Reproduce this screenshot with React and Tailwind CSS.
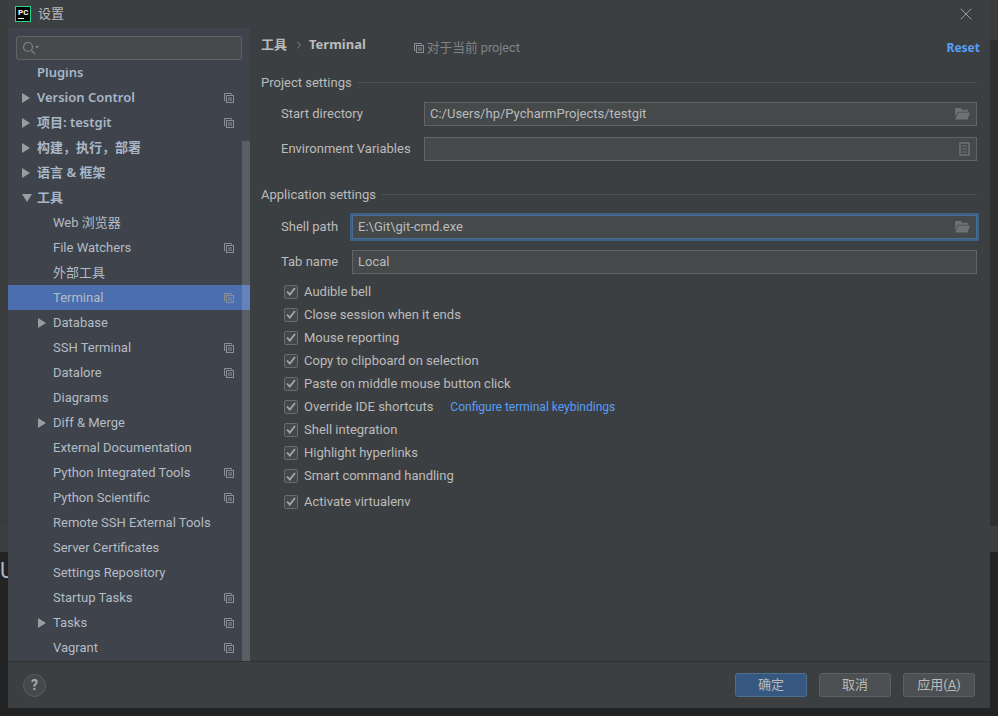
import { ChevronRight, X } from "lucide-react";

const font = { fontFamily: 'Roboto, "Noto Sans CJK SC", sans-serif' };
const boldFont = "font-['Noto_Sans','Noto_Sans_CJK_SC',sans-serif]";

const navItems = [
  { label: "Version Control", top: true, arrow: "right", copy: true },
  { label: "项目: testgit", top: true, arrow: "right", copy: true },
  { label: "构建，执行，部署", top: true, arrow: "right" },
  { label: "语言 & 框架", top: true, arrow: "right" },
  { label: "工具", top: true, arrow: "down" },
  { label: "Web 浏览器" },
  { label: "File Watchers", copy: true },
  { label: "外部工具" },
  { label: "Terminal", copy: true, active: true },
  { label: "Database", arrow: "right" },
  { label: "SSH Terminal", copy: true },
  { label: "Datalore", copy: true },
  { label: "Diagrams" },
  { label: "Diff & Merge", arrow: "right" },
  { label: "External Documentation" },
  { label: "Python Integrated Tools", copy: true },
  { label: "Python Scientific", copy: true },
  { label: "Remote SSH External Tools" },
  { label: "Server Certificates" },
  { label: "Settings Repository" },
  { label: "Startup Tasks", copy: true },
  { label: "Tasks", arrow: "right", copy: true },
  { label: "Vagrant", copy: true },
];

const checks = [
  "Audible bell",
  "Close session when it ends",
  "Mouse reporting",
  "Copy to clipboard on selection",
  "Paste on middle mouse button click",
  "Override IDE shortcuts",
  "Shell integration",
  "Highlight hyperlinks",
  "Smart command handling",
  "Activate virtualenv",
];

function CopyIcon({ className = "" }) {
  return (
    <svg width="10" height="10" viewBox="0 0 10 10" fill="none" stroke="#8a9096" className={className}>
      <path d="M7.5 1.5V.5H.5v7h1" />
      <rect x="2.5" y="2.5" width="7" height="7" />
      <path d="M4 5h4M4 7h4" />
    </svg>
  );
}

function FolderIcon() {
  return (
    <svg width="15" height="12" viewBox="0 0 16 13" fill="#6e7275">
      <path d="M0 0h6l1.500 2H14v2H3L0 10z" />
      <path d="M3.500 5H16l-2.500 7.500H0z" />
    </svg>
  );
}

function Triangle({ dir }) {
  if (dir === "down") {
    return (
      <svg width="10" height="8" viewBox="0 0 10 8" fill="#9a9da0">
        <path d="M0 0h10L5 8z" />
      </svg>
    );
  }
  return (
    <svg width="8" height="10" viewBox="0 0 8 10" fill="#9a9da0">
      <path d="M0 0l8 5-8 5z" />
    </svg>
  );
}

function NavRow({ item }) {
  return (
    <div className={`h-[25px] flex items-center relative ${item.active ? "bg-[#4b6eaf]" : ""}`}>
      <div className={`${item.top ? "w-[29px] pl-[14px]" : "w-[45px] pl-[30px]"} shrink-0 flex items-center`}>
        {item.arrow && <Triangle dir={item.arrow} />}
      </div>
      <span className={`whitespace-nowrap ${item.top ? `text-[13px] font-semibold text-[#a9b7c6] ${boldFont}` : "text-[13px] text-[#b4bcc4]"}`}>
        {item.label}
      </span>
      {item.copy && <CopyIcon className="absolute left-[216px] top-[8px]" />}
    </div>
  );
}

function Field({ value, icon, focused }) {
  return (
    <div
      className={`flex-1 h-[24px] flex items-center justify-between pl-[5px] pr-[6px] bg-[#45494a] text-[13px] text-[#bbbbbb] border ${
        focused ? "border-[#466d94] outline-2 outline-[#3d6185]" : "border-[#646464]"
      }`}
    >
      <span>{value}</span>
      {icon}
    </div>
  );
}

function SectionTitle({ children }) {
  return (
    <div className="flex items-center gap-[6px] text-[13px] text-[#bbbbbb]">
      <span>{children}</span>
      <div className="flex-1 h-px bg-[#515151]" />
    </div>
  );
}

export default function App() {
  return (
    <div className="w-[998px] h-[716px] relative overflow-hidden bg-[#232323]" style={font}>
      {/* window behind the dialog */}
      <div className="h-[526px] bg-[#3a3b3c]" />
      <div className="h-[26px] bg-[#3c3d3e]" />
      <div className="pt-[8px] text-[22px] text-[#a9b7c6] leading-none">U</div>
      <div className="absolute right-0 top-[40px] w-[8px] h-[486px] bg-[#2e2f30]" />

      <div className="absolute left-[8px] top-0 w-[982px] h-[708px] bg-[#3c3f41] flex flex-col">
        <div className="h-[28px] shrink-0 flex items-center relative">
          <div className="ml-[7px] w-[16px] h-[16px] bg-black border border-[#21d789] flex flex-col px-[2px] pt-[1px]">
            <span className="text-[8px] font-bold leading-[9px] text-white">PC</span>
            <span className="w-[6px] h-px bg-white mt-[1px]" />
          </div>
          <span className="ml-[7px] text-[13px] text-[#bbbbbb]">设置</span>
          <X size={20} strokeWidth={1} className="absolute right-[14px] top-[4px] text-[#afb1b3]" />
        </div>

        <div className="flex-1 flex min-h-0">
          {/* sidebar */}
          <div className="w-[242px] shrink-0 bg-[#3e434c] relative overflow-hidden">
            <div className="mx-[8px] mt-[8px] h-[24px] bg-[#45494a] border border-[#646464] rounded-[3px] flex items-center pl-[5px]">
              <svg width="17" height="15" viewBox="0 0 17 15" fill="none" stroke="#7f8386" strokeWidth="1.200">
                <circle cx="6" cy="6" r="4.500" />
                <path d="M9.500 9.500L13 13" />
                <path d="M13 5h4l-2 2.500z" fill="#7f8386" stroke="none" />
              </svg>
            </div>
            <div className="mt-[8px] overflow-hidden">
              <div className="-mt-[8px] h-[25px] flex items-center pl-[29px]">
                <span className={`text-[13px] font-semibold text-[#a9b7c6] ${boldFont}`}>Plugins</span>
              </div>
              {navItems.map((item) => (
                <NavRow key={item.label} item={item} />
              ))}
            </div>
            <div className="absolute right-0 top-[113px] bottom-0 w-[8px] bg-[#ffffff]/15" />
          </div>

          {/* content */}
          <div className="flex-1 px-[11px] pr-[13px] min-w-0">
            <div className="h-[45px] flex items-start pt-[7px] relative">
              <span className="text-[13px] font-semibold text-[#bbbbbb]">工具</span>
              <ChevronRight size={12} strokeWidth={1.500} className="ml-[6px] mr-[4px] mt-[4px] text-[#9a9da0]" />
              <span className={`text-[13px] font-bold text-[#bbbbbb] ${boldFont}`}>Terminal</span>
              <span className="ml-[48px] mt-[3px] flex items-center gap-[3px] text-[12.700px] text-[#808487]">
                <CopyIcon />
                对于当前 project
              </span>
              <span className={`absolute right-[-3px] top-[11px] text-[12px] font-bold text-[#589df6] ${boldFont}`}>Reset</span>
            </div>

            <SectionTitle>Project settings</SectionTitle>
            <div className="pl-[20px] mt-[9px] flex items-center">
              <span className="w-[143px] text-[13px] text-[#bbbbbb]">Start directory</span>
              <Field value="C:/Users/hp/PycharmProjects/testgit" icon={<FolderIcon />} />
            </div>
            <div className="pl-[20px] mt-[11px] flex items-center">
              <span className="w-[143px] text-[13px] text-[#bbbbbb]">Environment Variables</span>
              <Field
                value=""
                icon={
                  <svg width="11" height="14" viewBox="0 0 11 14" fill="none" stroke="#6e7275" strokeWidth="1.500">
                    <rect x="1" y="1" width="9" height="12" />
                    <path d="M3 4h5M3 7h5M3 10h5" strokeWidth="1" />
                  </svg>
                }
              />
            </div>

            <div className="mt-[24px]">
              <SectionTitle>Application settings</SectionTitle>
            </div>
            <div className="pl-[20px] mt-[11px] flex items-center">
              <span className="w-[71px] text-[13px] text-[#bbbbbb]">Shell path</span>
              <Field value="E:\Git\git-cmd.exe" icon={<FolderIcon />} focused />
            </div>
            <div className="pl-[20px] mt-[11px] flex items-center">
              <span className="w-[71px] text-[13px] text-[#bbbbbb]">Tab name</span>
              <Field value="Local" />
            </div>

            <div className="pl-[23px] mt-[6px] flex flex-col">
              {checks.map((label) => (
                <div
                  key={label}
                  className={`flex items-center gap-[6px] text-[13px] text-[#bbbbbb] ${
                    label === "Smart command handling" ? "h-[24px]" : label === "Activate virtualenv" ? "h-[27px]" : "h-[23px]"
                  }`}
                >
                  <div className="w-[14px] h-[14px] rounded-[2px] bg-[#43494a] border border-[#6b6b6b] flex items-center justify-center">
                    <svg width="10" height="9" viewBox="0 0 10 9" fill="none" stroke="#a7a7a7" strokeWidth="1.800">
                      <path d="M1 4.500L3.800 7.500L9 1" />
                    </svg>
                  </div>
                  <span>{label}</span>
                  {label === "Override IDE shortcuts" && (
                    <span className="ml-[11px] text-[12px] text-[#589df6]">Configure terminal keybindings</span>
                  )}
                </div>
              ))}
            </div>
          </div>
        </div>

        {/* footer */}
        <div className="h-[47px] shrink-0 border-t border-[#323232] flex items-center relative">
          <div className="ml-[15px] w-[23px] h-[23px] rounded-full bg-[#45494a] border border-[#5a5d5f] flex items-center justify-center text-[14px] font-bold text-[#a8a8a8]">
            ?
          </div>
          <div className="ml-auto mr-[15px] flex gap-[12px]">
            <button className="w-[72px] h-[24px] rounded-[3px] bg-[#365880] border border-[#4c708c] text-[13px] text-[#bbbbbb]">确定</button>
            <button className="w-[72px] h-[24px] rounded-[3px] bg-[#4c5052] border border-[#5e6060] text-[13px] text-[#bbbbbb]">取消</button>
            <button className="w-[72px] h-[24px] rounded-[3px] bg-[#4c5052] border border-[#5e6060] text-[13px] text-[#bbbbbb]">
              应用(<span className="underline">A</span>)
            </button>
          </div>
        </div>
      </div>
    </div>
  );
}
